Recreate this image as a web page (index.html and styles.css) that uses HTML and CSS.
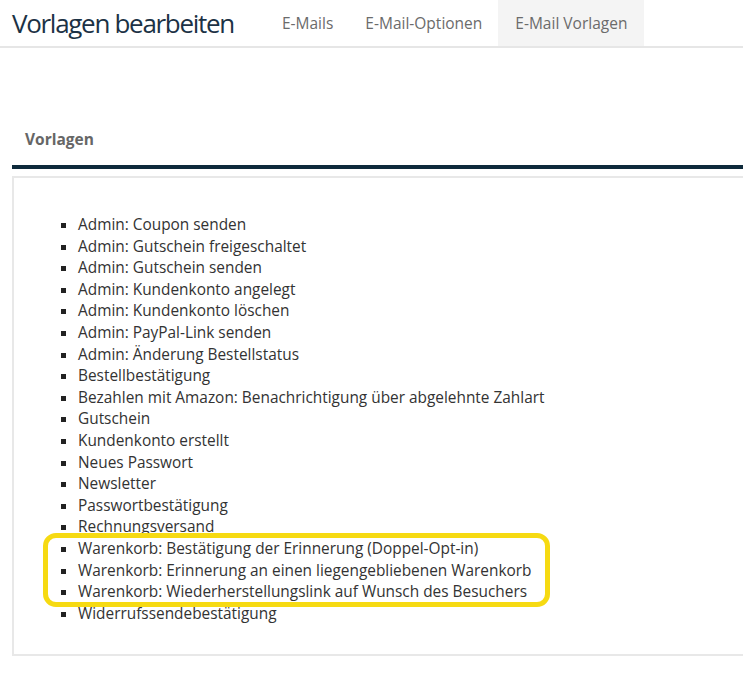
FILE: index.html
```html
<!DOCTYPE html>
<html lang="de">
<head>
<meta charset="utf-8">
<title>Vorlagen bearbeiten</title>
<link rel="stylesheet" href="styles.css">
</head>
<body>
<header class="topbar">
  <h1 class="title">Vorlagen bearbeiten</h1>
  <nav class="tabs">
    <a class="tab">E-Mails</a>
    <a class="tab">E-Mail-Optionen</a>
    <a class="tab active">E-Mail Vorlagen</a>
  </nav>
</header>
<main class="content">
  <div class="section-head">Vorlagen</div>
  <div class="panel">
    <ul class="templates">
      <li>Admin: Coupon senden</li>
      <li>Admin: Gutschein freigeschaltet</li>
      <li>Admin: Gutschein senden</li>
      <li>Admin: Kundenkonto angelegt</li>
      <li>Admin: Kundenkonto löschen</li>
      <li>Admin: PayPal-Link senden</li>
      <li>Admin: Änderung Bestellstatus</li>
      <li>Bestellbestätigung</li>
      <li>Bezahlen mit Amazon: Benachrichtigung über abgelehnte Zahlart</li>
      <li>Gutschein</li>
      <li>Kundenkonto erstellt</li>
      <li>Neues Passwort</li>
      <li>Newsletter</li>
      <li>Passwortbestätigung</li>
      <li>Rechnungsversand</li>
      <li>Warenkorb: Bestätigung der Erinnerung (Doppel-Opt-in)</li>
      <li>Warenkorb: Erinnerung an einen liegengebliebenen Warenkorb</li>
      <li>Warenkorb: Wiederherstellungslink auf Wunsch des Besuchers</li>
      <li>Widerrufssendebestätigung</li>
    </ul>
    <div class="highlight"></div>
  </div>
</main>
</body>
</html>
```
FILE: styles.css
```css
html, body {
  margin: 0;
  padding: 0;
  background: #ffffff;
  font-family: "Open Sans", "Liberation Sans", sans-serif;
  color: #333333;
}

.topbar {
  display: flex;
  align-items: stretch;
  height: 46px;
  padding-left: 12px;
  border-bottom: 2px solid #e6e6e6;
}

.title {
  margin: 0 32px 0 0;
  font-size: 26px;
  font-weight: 400;
  font-stretch: 91%;
  letter-spacing: -1.3px;
  color: #1c3245;
  line-height: 46px;
}

.tabs {
  display: flex;
  align-items: stretch;
}

.tab {
  display: flex;
  align-items: center;
  padding: 0 16px;
  font-size: 15.5px;
  color: #6b6b6b;
  text-decoration: none;
}

.tab.active {
  padding: 0 17px;
  background: #f4f4f4;
}

.content {
  padding-left: 12px;
}

.section-head {
  padding: 80px 0 0 13px;
  height: 37px;
  font-size: 15.5px;
  font-weight: 700;
  color: #666666;
  border-bottom: 4px solid #0e2a3b;
}

.panel {
  position: relative;
  margin-top: 7px;
  border: 2px solid #e8e8e8;
  border-right: none;
  height: 476px;
}

.templates {
  list-style: square;
  margin: 36px 0 0 0;
  padding-left: 64px;
  font-size: 15.4px;
  line-height: 21.6px;
  color: #333333;
}

.templates li::marker {
  color: #222222;
}

.highlight {
  position: absolute;
  left: 29px;
  top: 355px;
  width: 497px;
  height: 64px;
  border: 5px solid #f6da12;
  border-radius: 13px;
}
```
